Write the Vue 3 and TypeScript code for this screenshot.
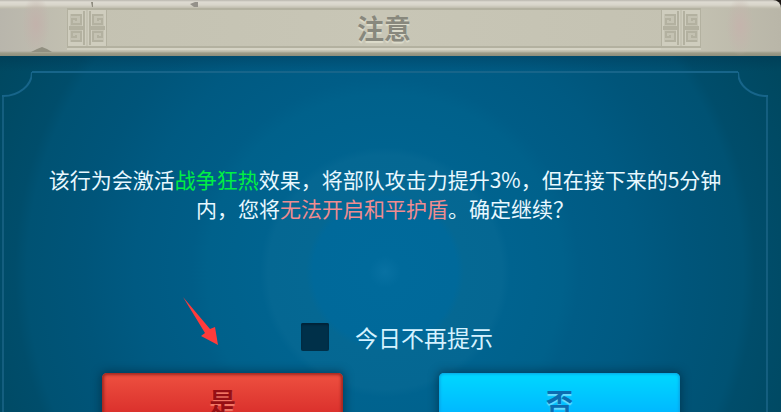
<script setup lang="ts">
import { ref } from 'vue'

const skipToday = ref(false)
const open = ref(true)
const quarters: string[] = [
  'translate(0 0)',
  'translate(40 0) scale(-1 1)',
  'translate(0 40) scale(1 -1)',
  'translate(40 40) scale(-1 -1)',
]

function close(): void {
  open.value = false
}
</script>

<template>
  <main class="stage">
    <section v-if="open" class="dialog" role="dialog" aria-labelledby="dialog-title">
      <header class="header">
        <svg class="chip chip-top" viewBox="0 0 110 8" aria-hidden="true">
          <path d="M1 2h2v5H2z" fill="#8f8c80" />
          <path d="M100 4l5-2h3v5h-4z" fill="#94918a" />
        </svg>
        <svg class="chip chip-bottom" viewBox="0 0 22 6" aria-hidden="true">
          <path d="M0 5l6-3 5-2 5 2 5 3z" fill="#918f80" />
        </svg>
        <svg class="meander" viewBox="0 0 40 40" aria-hidden="true">
          <rect class="edge" x="1" y="1" width="38" height="38" />
          <g v-for="q in quarters" :key="q" :transform="q">
            <path class="lit" d="M3 5H16V19H2V3H18V20" />
            <path class="cut" d="M4 7H14V16H5V11H9V13" />
            <path class="cut" d="M2 19H17V3" />
          </g>
        </svg>
        <h1 id="dialog-title" class="title">注意</h1>
        <svg class="meander" viewBox="0 0 40 40" aria-hidden="true">
          <rect class="edge" x="1" y="1" width="38" height="38" />
          <g v-for="q in quarters" :key="q" :transform="q">
            <path class="lit" d="M3 5H16V19H2V3H18V20" />
            <path class="cut" d="M4 7H14V16H5V11H9V13" />
            <path class="cut" d="M2 19H17V3" />
          </g>
        </svg>
      </header>

      <div class="body">
        <div class="frame-top" aria-hidden="true">
          <svg class="corner" viewBox="0 0 30 26"><path d="M30 1A29 24 0 0 1 1 25V26" /></svg>
          <span class="rule"></span>
          <svg class="corner" viewBox="0 0 30 26"><path d="M0 1A29 24 0 0 0 29 25V26" /></svg>
        </div>
        <div class="frame">
          <p class="message">
            <span>该行为会激活</span><em class="good">战争狂热</em><span>效果，将部队攻击力提升3%，但在接下来的5分钟内，您将</span><em class="bad">无法开启和平护盾</em><span>。确定继续？</span>
          </p>
          <label class="skip">
            <input v-model="skipToday" type="checkbox" />
            <span>今日不再提示</span>
          </label>
          <div class="actions">
            <button type="button" class="btn yes" @click="close">是</button>
            <button type="button" class="btn no" @click="close">否</button>
          </div>
        </div>
      </div>

      <svg class="pointer" viewBox="0 0 38 50" aria-hidden="true">
        <path d="M1 0L28 32l5-2 3 18-17-9 4-3z" fill="#ff3b3b" />
      </svg>
    </section>
  </main>
</template>

<style>
body {
  margin: 0;
  background: #1b1714;
}
</style>

<style scoped>
.stage {
  height: 100vh;
  overflow: hidden;
  font-family: "Noto Sans CJK SC", "Noto Sans", sans-serif;
}
.dialog {
  position: relative;
  display: flex;
  flex-direction: column;
  min-height: 100%;
  margin-left: -11px;
}
.header {
  position: relative;
  display: flex;
  box-sizing: border-box;
  height: 56px;
  padding: 8px 80px 8px 78px;
  border-radius: 0 8px 0 0;
  background:
    radial-gradient(ellipse 14px 30px at 47px 24px, #c2b2ab, transparent),
    radial-gradient(ellipse 14px 30px at calc(100% - 41px) 26px, #c4b4ac, transparent),
    linear-gradient(#b9b6ae 0, #dedbd2 2px, #d8d5ca 5px, #c0bdae 8px, transparent 9px, transparent 51px, #9c9b88 53px, #8d8e7c 56px),
    linear-gradient(90deg, #b7b4ab, #c4c2b2 12%, #c8c6b6 50%, #c4c2b2 88%, #b9b6a8);
}
.title {
  flex: 1;
  box-sizing: border-box;
  height: 40px;
  margin: 0;
  border-top: 2px solid #b3b1a0;
  border-bottom: 2px solid #b3b1a0;
  box-shadow: 0 2px 0 #d5d3c4;
  color: #88887d;
  font-size: 27px;
  font-weight: 700;
  line-height: 36px;
  text-align: center;
  text-shadow: 0 2px 1px #dddccb;
}
.meander {
  width: 40px;
  height: 40px;
  fill: none;
  stroke-width: 2;
  box-shadow: 0 2px 0 #d0cebf;
}
.edge,
.cut {
  stroke: #b3b1a0;
}
.lit {
  stroke: #cfcdbe;
}
.chip {
  position: absolute;
}
.chip-top {
  top: 0;
  left: 101px;
  width: 110px;
  height: 8px;
}
.chip-bottom {
  top: 47px;
  left: 42px;
  width: 22px;
  height: 6px;
}
.body {
  flex: 1;
  display: flex;
  flex-direction: column;
  padding: 15px 13px 0;
  background:
    linear-gradient(rgba(0, 45, 70, 0.3), transparent 16px),
    radial-gradient(circle at 50% 216px, #0871a2 0, #006a9b 16px, #00699a 72px, #056893 79px, #056792 117px, #00638f 125px, #00618b 178px, #005d87 194px, #005a82 250px, #00557a 300px, #005273 358px, #004d6b 370px, #004860 440px);
}
.frame-top {
  display: flex;
}
.corner {
  width: 30px;
  height: 26px;
  fill: none;
  stroke: #17658a;
  stroke-width: 2;
}
.rule {
  flex: 1;
  height: 2px;
  background: #17658a;
}
.frame {
  flex: 1;
  padding: 0 40px;
  border: solid #145e7f;
  border-width: 0 2px;
}
.message {
  margin: 68px 0 0;
  color: #e8f8ff;
  font-size: 21px;
  line-height: 29px;
  text-align: center;
}
.message em {
  font-style: normal;
}
.message .good {
  color: #00f043;
}
.message .bad {
  color: #f08c90;
}
.skip {
  display: flex;
  align-items: center;
  justify-content: center;
  gap: 26px;
  margin-top: 97px;
  padding-left: 24px;
  color: #d5f2ff;
  font-size: 23px;
  line-height: 34px;
}
.skip input {
  appearance: none;
  width: 28px;
  height: 28px;
  margin: 0;
  border-radius: 2px;
  background: #003049;
  box-shadow: inset 0 2px 2px #002338;
}
.skip input:checked {
  background: #27b8ec;
}
.actions {
  display: flex;
  justify-content: center;
  gap: 96px;
  margin-top: 19px;
  padding-left: 12px;
}
.btn {
  flex: 0 1 241px;
  height: 58px;
  padding: 0;
  border: 0;
  border-radius: 5px;
  font: 700 27px/58px "Noto Sans CJK SC", sans-serif;
}
.yes {
  background: linear-gradient(#ee5140, #d92d2a 44px);
  box-shadow: inset 0 0 3px 2px #a02820, 0 0 8px 2px rgba(0, 35, 55, 0.5);
  color: #970f14;
  text-shadow: 0 2px 1px #f47a68;
}
.no {
  background: linear-gradient(#00d8ff, #00b5ff 44px);
  box-shadow: inset 0 0 3px 1px #0a9fe0, 0 0 8px 2px rgba(0, 35, 55, 0.5);
  color: #0b6db1;
  text-shadow: 0 2px 1px #66dcff;
}
.pointer {
  position: absolute;
  top: 297px;
  left: 193px;
  width: 38px;
  height: 50px;
}
</style>
